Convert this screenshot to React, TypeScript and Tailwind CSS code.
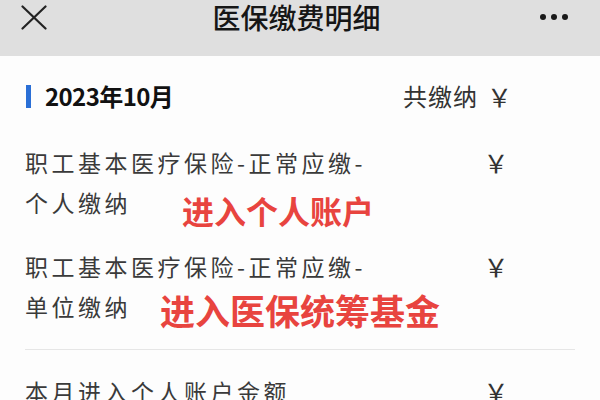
const cjk = { fontFamily: '"Noto Sans CJK SC", "Noto Sans", sans-serif' };

function Amount() {
  // amount is left blank, only the currency sign is shown
  return (
    <div className="flex items-center">
      <span className="text-[25px] leading-none text-[#333]">￥</span>
      <span className="w-[88px]" />
    </div>
  );
}

function CloseIcon() {
  return (
    <svg width="26" height="25" viewBox="0 0 26 25" fill="none" stroke="#222" strokeWidth="2.2" strokeLinecap="round">
      <path d="M1.5 1.5 L24.5 23.5" />
      <path d="M24.5 1.5 L1.5 23.5" />
    </svg>
  );
}

export default function App() {
  return (
    <div className="w-[600px] h-[400px] overflow-hidden bg-[#fdfdfd]" style={cjk}>
      {/* top bar */}
      <div className="h-[56px] bg-[#dfdfdf]">
        <div className="grid h-[34px] grid-cols-[1fr_auto_1fr] items-center pl-[21px] pr-[32px]">
          <CloseIcon />
          <span className="ml-[4px] text-[28px] leading-[34px] font-medium text-[#161616]">医保缴费明细</span>
          <div className="flex justify-end gap-[5px]">
            <span className="w-[6px] h-[6px] rounded-full bg-[#1a1a1a]" />
            <span className="w-[6px] h-[6px] rounded-full bg-[#1a1a1a]" />
            <span className="w-[6px] h-[6px] rounded-full bg-[#1a1a1a]" />
          </div>
        </div>
      </div>

      <div className="pl-[25px]">
        {/* month header */}
        <div className="mt-[26px] flex h-[28px] items-center justify-between">
          <div className="flex items-center">
            <span className="w-[5px] h-[23px] bg-[#2a6fd6] ml-[1px]" />
            <span className="ml-[14px] text-[24px] leading-[28px] font-semibold text-[#111] tracking-[-0.6px]">2023年10月</span>
          </div>
          <div className="flex items-center">
            <span className="text-[24px] leading-[28px] text-[#333] tracking-[1px] mr-[9px]">共缴纳</span>
            <Amount />
          </div>
        </div>

        {/* personal part */}
        <div className="mt-[32px] flex justify-between text-[23px] text-[#3a3a3a] tracking-[3.5px]">
          <div className="leading-[40px]">
            <div>职工基本医疗保险-正常应缴-</div>
            <div className="flex items-center">
              <span>个人缴纳</span>
              <span className="ml-[51px] translate-y-[8px] text-[32px] leading-[40px] font-bold text-[#e8443f] tracking-[0px]">进入个人账户</span>
            </div>
          </div>
          <div className="h-[40px] flex items-center">
            <Amount />
          </div>
        </div>

        {/* employer part */}
        <div className="mt-[24px] flex justify-between text-[23px] text-[#3a3a3a] tracking-[3.5px]">
          <div className="leading-[40px]">
            <div>职工基本医疗保险-正常应缴-</div>
            <div className="flex items-center">
              <span>单位缴纳</span>
              <span className="ml-[29px] translate-y-[4px] text-[35px] leading-[40px] font-bold text-[#e8443f] tracking-[0px]">进入医保统筹基金</span>
            </div>
          </div>
          <div className="h-[40px] flex items-center">
            <Amount />
          </div>
        </div>

        <div className="mt-[23px] mr-[25px] h-px bg-[#e6e6e6]" />

        <div className="mt-[21px] flex justify-between text-[23px] text-[#3a3a3a] tracking-[3.5px] leading-[40px]">
          <span>本月进入个人账户金额</span>
          <div className="h-[40px] flex items-center">
            <Amount />
          </div>
        </div>
      </div>
    </div>
  );
}
